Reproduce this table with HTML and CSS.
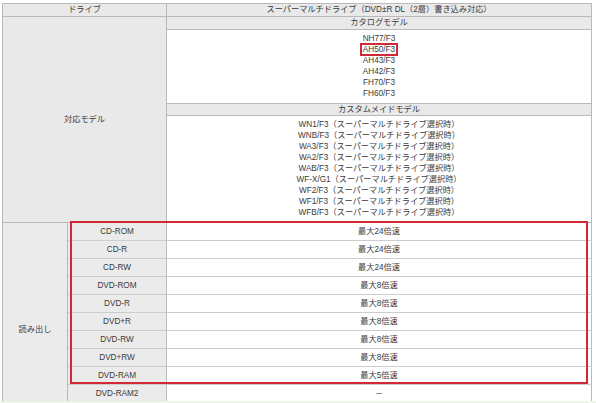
FILE: index.html
```html
<!DOCTYPE html>
<html lang="ja">
<head>
<meta charset="utf-8">
<title>ドライブ仕様</title>
<link rel="stylesheet" href="styles.css">
</head>
<body>
<div class="wrap">
  <table class="spec">
    <colgroup>
      <col class="c1">
      <col class="c2">
      <col class="c3">
    </colgroup>
    <tr class="head">
      <th colspan="2">ドライブ</th>
      <th>スーパーマルチドライブ（DVD±R DL（2層）書き込み対応）</th>
    </tr>
    <tr class="sub">
      <th colspan="2" rowspan="4" class="side">対応モデル</th>
      <th>カタログモデル</th>
    </tr>
    <tr>
      <td class="list">NH77/F3<br><span class="mark">AH50/F3</span><br>AH43/F3<br>AH42/F3<br>FH70/F3<br>FH60/F3</td>
    </tr>
    <tr class="sub">
      <th>カスタムメイドモデル</th>
    </tr>
    <tr>
      <td class="list">WN1/F3（スーパーマルチドライブ選択時）<br>WNB/F3（スーパーマルチドライブ選択時）<br>WA3/F3（スーパーマルチドライブ選択時）<br>WA2/F3（スーパーマルチドライブ選択時）<br>WAB/F3（スーパーマルチドライブ選択時）<br>WF-X/G1（スーパーマルチドライブ選択時）<br>WF2/F3（スーパーマルチドライブ選択時）<br>WF1/F3（スーパーマルチドライブ選択時）<br>WFB/F3（スーパーマルチドライブ選択時）</td>
    </tr>
    <tr class="media">
      <th rowspan="10" class="side read">読み出し</th>
      <th class="label">CD-ROM</th>
      <td>最大24倍速</td>
    </tr>
    <tr class="media"><th class="label">CD-R</th><td>最大24倍速</td></tr>
    <tr class="media"><th class="label">CD-RW</th><td>最大24倍速</td></tr>
    <tr class="media"><th class="label">DVD-ROM</th><td>最大8倍速</td></tr>
    <tr class="media"><th class="label">DVD-R</th><td>最大8倍速</td></tr>
    <tr class="media"><th class="label">DVD+R</th><td>最大8倍速</td></tr>
    <tr class="media"><th class="label">DVD-RW</th><td>最大8倍速</td></tr>
    <tr class="media"><th class="label">DVD+RW</th><td>最大8倍速</td></tr>
    <tr class="media"><th class="label">DVD-RAM</th><td>最大5倍速</td></tr>
    <tr class="media"><th class="label">DVD-RAM2</th><td>－</td></tr>
  </table>
  <div class="highlight"></div>
</div>
<div class="footbar"></div>
</body>
</html>
```
FILE: styles.css
```css
html, body {
  margin: 0;
  padding: 0;
  background: #ffffff;
}

body {
  font-family: "Liberation Sans", "Noto Sans CJK JP", sans-serif;
  font-size: 8.2px;
  color: #3a3a3a;
}

.wrap {
  position: relative;
  padding: 3px 0 0 2px;
}

.spec {
  width: 589px;
  table-layout: fixed;
  border-collapse: collapse;
  border: 1px solid #b4b4b4;
}

.c1 { width: 65px; }
.c2 { width: 99px; }
.c3 { width: 425px; }

.spec th,
.spec td {
  border: 1px solid #b9b9b9;
  padding: 0;
  text-align: center;
  vertical-align: middle;
  font-weight: normal;
}

.head th {
  background: #e9e9e9;
  line-height: 12px;
}

.sub th {
  background: #e9e9e9;
  line-height: 12px;
}

.sub + tr + .sub th {
  line-height: 11px;
}

.side {
  background: #e9e9e9;
}

.list {
  background: #ffffff;
  line-height: 11px;
  padding: 3px 0 4px !important;
}

.mark {
  border: 2px solid #d12a36;
  padding: 0 1px;
}

.media th.side {
  background: #ebebeb;
}

.spec .read {
  vertical-align: top;
  padding-top: 101px;
  line-height: 12px;
}

.media .label {
  background: #ebebeb;
  line-height: 17px;
  border-top-color: #cdcdcd;
  border-bottom-color: #cdcdcd;
}

.media td {
  background: #ffffff;
  line-height: 17px;
  border-color: #cdcdcd #b9b9b9;
}

.highlight {
  position: absolute;
  left: 70px;
  top: 221px;
  width: 514px;
  height: 159px;
  border: 2px solid #d12a36;
}

.footbar {
  position: fixed;
  left: 0;
  right: 0;
  bottom: 0;
  height: 2px;
  background: #eef5e8;
}
```
